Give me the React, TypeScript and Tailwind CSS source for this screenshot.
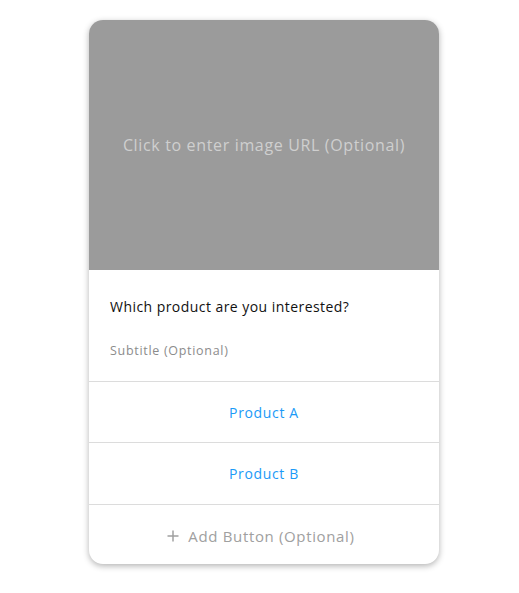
import React from "react";

export default function App() {
  return (
    <div className="w-[519px] h-[593px] bg-white flex pl-[89px] pt-[20px]" style={{ fontFamily: "'Open Sans', Lato, sans-serif" }}>
      <div className="w-[350px] h-[544px] rounded-[14px] bg-white overflow-hidden flex flex-col shadow-[0_2px_6px_rgba(0,0,0,0.3)]">
        <div className="h-[250px] bg-[#9b9b9b] flex items-center justify-center shrink-0">
          <span className="text-[16px] tracking-[0.65px] text-[#cfcfcf]">Click to enter image URL (Optional)</span>
        </div>
        <div className="h-[112px] px-[21px] pt-[27px] flex flex-col border-b border-[#dcdcdc] shrink-0">
          <div className="text-[14px] leading-[20px] tracking-[0.45px] text-[#111]">Which product are you interested?</div>
          <div className="mt-[25px] text-[12.5px] leading-[18px] tracking-[0.7px] text-[#8c8c8c]">Subtitle (Optional)</div>
        </div>
        <div className="h-[61px] flex items-center justify-center border-b border-[#dcdcdc] text-[14px] tracking-[0.65px] text-[#1b9af7] shrink-0">Product A</div>
        <div className="h-[62px] flex items-center justify-center border-b border-[#dcdcdc] text-[14px] tracking-[0.65px] text-[#1b9af7] shrink-0">Product B</div>
        <div className="flex-1 flex items-center justify-center pt-[3px] pr-[6px] text-[15px] tracking-[0.65px] text-[#a0a0a0]">
          <svg width="12" height="12" viewBox="0 0 12 12" className="mr-[9px]">
            <path d="M6 0.5V11.5M0.5 6H11.5" stroke="#a0a0a0" strokeWidth="1.5" />
          </svg>
          Add Button (Optional)
        </div>
      </div>
    </div>
  );
}
